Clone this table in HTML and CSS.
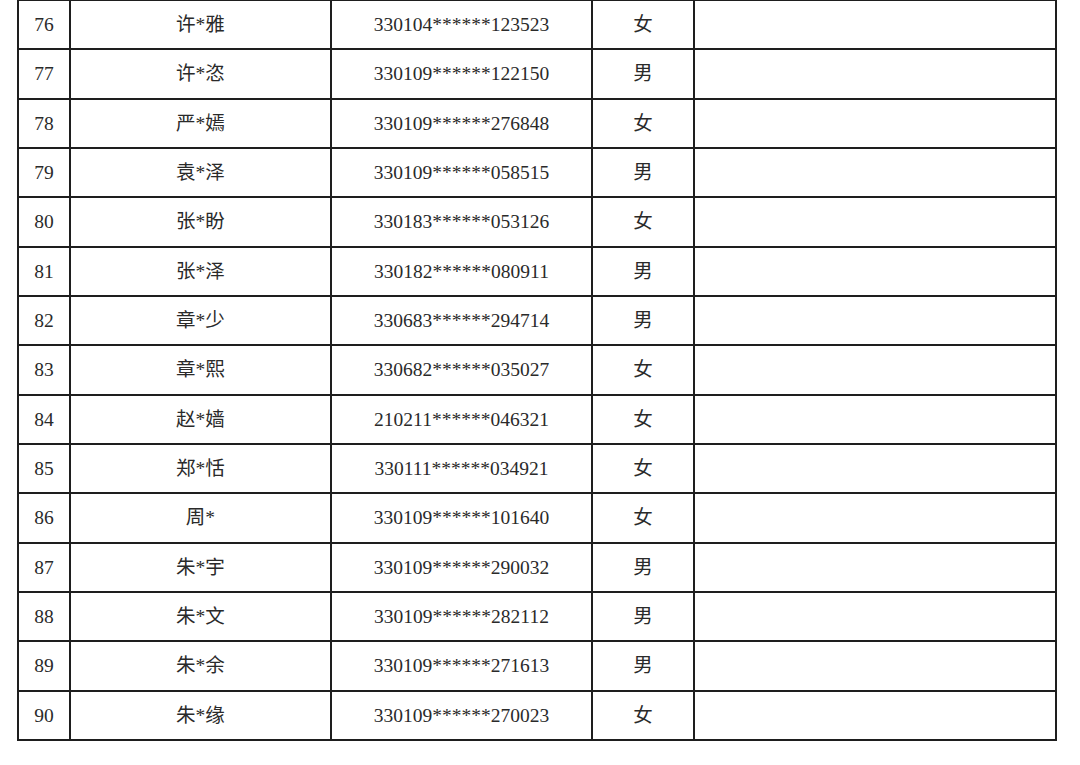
FILE: index.html
```html
<!DOCTYPE html>
<html lang="zh-CN">
<head>
<meta charset="utf-8">
<title>名单</title>
<link rel="stylesheet" href="styles.css">
</head>
<body>
<table class="roster">
  <colgroup>
    <col class="c-no"><col class="c-name"><col class="c-id"><col class="c-sex"><col class="c-note">
  </colgroup>
  <tbody>
    <tr><td>76</td><td>许*雅</td><td>330104******123523</td><td>女</td><td></td></tr>
    <tr class="thin"><td>77</td><td>许*恣</td><td>330109******122150</td><td>男</td><td></td></tr>
    <tr><td>78</td><td>严*嫣</td><td>330109******276848</td><td>女</td><td></td></tr>
    <tr><td>79</td><td>袁*泽</td><td>330109******058515</td><td>男</td><td></td></tr>
    <tr><td>80</td><td>张*盼</td><td>330183******053126</td><td>女</td><td></td></tr>
    <tr><td>81</td><td>张*泽</td><td>330182******080911</td><td>男</td><td></td></tr>
    <tr><td>82</td><td>章*少</td><td>330683******294714</td><td>男</td><td></td></tr>
    <tr><td>83</td><td>章*熙</td><td>330682******035027</td><td>女</td><td></td></tr>
    <tr><td>84</td><td>赵*嫱</td><td>210211******046321</td><td>女</td><td></td></tr>
    <tr><td>85</td><td>郑*恬</td><td>330111******034921</td><td>女</td><td></td></tr>
    <tr><td>86</td><td>周*</td><td>330109******101640</td><td>女</td><td></td></tr>
    <tr><td>87</td><td>朱*宇</td><td>330109******290032</td><td>男</td><td></td></tr>
    <tr><td>88</td><td>朱*文</td><td>330109******282112</td><td>男</td><td></td></tr>
    <tr class="thin"><td>89</td><td>朱*余</td><td>330109******271613</td><td>男</td><td></td></tr>
    <tr><td>90</td><td>朱*缘</td><td>330109******270023</td><td>女</td><td></td></tr>
  </tbody>
</table>
</body>
</html>
```
FILE: styles.css
```css
html, body {
  margin: 0;
  padding: 0;
  background: #ffffff;
}
body {
  padding-left: 17px;
  padding-top: 0;
  font-family: "Liberation Serif", "Noto Sans CJK SC", serif;
  color: #2a2a2a;
}
.roster {
  border-collapse: collapse;
  table-layout: fixed;
  width: 1038px;
  margin-top: -1px;
}
.c-no { width: 52px; }
.c-name { width: 261px; }
.c-id { width: 261px; }
.c-sex { width: 102px; }
.c-note { width: 362px; }
.roster td {
  height: 46.33px;
  padding: 0;
  border: 2px solid #1e1e1e;
  text-align: center;
  vertical-align: middle;
  font-size: 19.5px;
  line-height: 22px;
  padding-top: 1px;
}
.roster td:nth-child(4) {
  border-left: 1px solid #444444;
  border-right: 2px solid #1e1e1e;
}
.roster tr.thin td {
  border-top: 1px solid #555555;
}
```
